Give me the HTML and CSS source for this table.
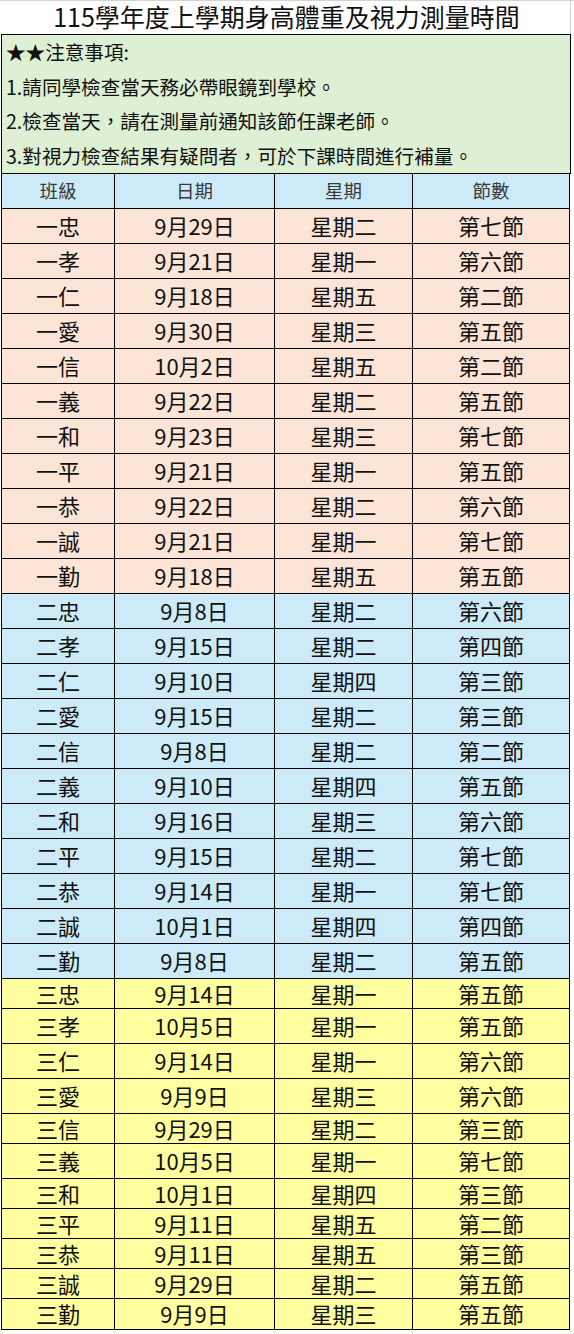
FILE: index.html
```html
<!DOCTYPE html>
<html lang="zh-Hant">
<head>
<meta charset="utf-8">
<title>115學年度上學期身高體重及視力測量時間</title>
<link rel="stylesheet" href="styles.css">
</head>
<body>
<div class="sheet">
  <div class="title">115學年度上學期身高體重及視力測量時間</div>
  <div class="notes">
    <div class="note">★★注意事項:</div>
    <div class="note">1.請同學檢查當天務必帶眼鏡到學校。</div>
    <div class="note">2.檢查當天，請在測量前通知該節任課老師。</div>
    <div class="note">3.對視力檢查結果有疑問者，可於下課時間進行補量。</div>
  </div>
  <div class="table">
    <div class="row head"><div class="c c1">班級</div><div class="c c2">日期</div><div class="c c3">星期</div><div class="c c4">節數</div></div>

    <div class="row g1"><div class="c c1">一忠</div><div class="c c2">9月29日</div><div class="c c3">星期二</div><div class="c c4">第七節</div></div>
    <div class="row g1"><div class="c c1">一孝</div><div class="c c2">9月21日</div><div class="c c3">星期一</div><div class="c c4">第六節</div></div>
    <div class="row g1"><div class="c c1">一仁</div><div class="c c2">9月18日</div><div class="c c3">星期五</div><div class="c c4">第二節</div></div>
    <div class="row g1"><div class="c c1">一愛</div><div class="c c2">9月30日</div><div class="c c3">星期三</div><div class="c c4">第五節</div></div>
    <div class="row g1"><div class="c c1">一信</div><div class="c c2">10月2日</div><div class="c c3">星期五</div><div class="c c4">第二節</div></div>
    <div class="row g1"><div class="c c1">一義</div><div class="c c2">9月22日</div><div class="c c3">星期二</div><div class="c c4">第五節</div></div>
    <div class="row g1"><div class="c c1">一和</div><div class="c c2">9月23日</div><div class="c c3">星期三</div><div class="c c4">第七節</div></div>
    <div class="row g1"><div class="c c1">一平</div><div class="c c2">9月21日</div><div class="c c3">星期一</div><div class="c c4">第五節</div></div>
    <div class="row g1"><div class="c c1">一恭</div><div class="c c2">9月22日</div><div class="c c3">星期二</div><div class="c c4">第六節</div></div>
    <div class="row g1"><div class="c c1">一誠</div><div class="c c2">9月21日</div><div class="c c3">星期一</div><div class="c c4">第七節</div></div>
    <div class="row g1"><div class="c c1">一勤</div><div class="c c2">9月18日</div><div class="c c3">星期五</div><div class="c c4">第五節</div></div>

    <div class="row g2"><div class="c c1">二忠</div><div class="c c2">9月8日</div><div class="c c3">星期二</div><div class="c c4">第六節</div></div>
    <div class="row g2"><div class="c c1">二孝</div><div class="c c2">9月15日</div><div class="c c3">星期二</div><div class="c c4">第四節</div></div>
    <div class="row g2"><div class="c c1">二仁</div><div class="c c2">9月10日</div><div class="c c3">星期四</div><div class="c c4">第三節</div></div>
    <div class="row g2"><div class="c c1">二愛</div><div class="c c2">9月15日</div><div class="c c3">星期二</div><div class="c c4">第三節</div></div>
    <div class="row g2"><div class="c c1">二信</div><div class="c c2">9月8日</div><div class="c c3">星期二</div><div class="c c4">第二節</div></div>
    <div class="row g2"><div class="c c1">二義</div><div class="c c2">9月10日</div><div class="c c3">星期四</div><div class="c c4">第五節</div></div>
    <div class="row g2"><div class="c c1">二和</div><div class="c c2">9月16日</div><div class="c c3">星期三</div><div class="c c4">第六節</div></div>
    <div class="row g2"><div class="c c1">二平</div><div class="c c2">9月15日</div><div class="c c3">星期二</div><div class="c c4">第七節</div></div>
    <div class="row g2"><div class="c c1">二恭</div><div class="c c2">9月14日</div><div class="c c3">星期一</div><div class="c c4">第七節</div></div>
    <div class="row g2"><div class="c c1">二誠</div><div class="c c2">10月1日</div><div class="c c3">星期四</div><div class="c c4">第四節</div></div>
    <div class="row g2"><div class="c c1">二勤</div><div class="c c2">9月8日</div><div class="c c3">星期二</div><div class="c c4">第五節</div></div>

    <div class="row g3 short"><div class="c c1">三忠</div><div class="c c2">9月14日</div><div class="c c3">星期一</div><div class="c c4">第五節</div></div>
    <div class="row g3"><div class="c c1">三孝</div><div class="c c2">10月5日</div><div class="c c3">星期一</div><div class="c c4">第五節</div></div>
    <div class="row g3"><div class="c c1">三仁</div><div class="c c2">9月14日</div><div class="c c3">星期一</div><div class="c c4">第六節</div></div>
    <div class="row g3"><div class="c c1">三愛</div><div class="c c2">9月9日</div><div class="c c3">星期三</div><div class="c c4">第六節</div></div>
    <div class="row g3 short"><div class="c c1">三信</div><div class="c c2">9月29日</div><div class="c c3">星期二</div><div class="c c4">第三節</div></div>
    <div class="row g3"><div class="c c1">三義</div><div class="c c2">10月5日</div><div class="c c3">星期一</div><div class="c c4">第七節</div></div>
    <div class="row g3 short"><div class="c c1">三和</div><div class="c c2">10月1日</div><div class="c c3">星期四</div><div class="c c4">第三節</div></div>
    <div class="row g3 short"><div class="c c1">三平</div><div class="c c2">9月11日</div><div class="c c3">星期五</div><div class="c c4">第二節</div></div>
    <div class="row g3 short"><div class="c c1">三恭</div><div class="c c2">9月11日</div><div class="c c3">星期五</div><div class="c c4">第三節</div></div>
    <div class="row g3 short"><div class="c c1">三誠</div><div class="c c2">9月29日</div><div class="c c3">星期二</div><div class="c c4">第五節</div></div>
    <div class="row g3 last"><div class="c c1">三勤</div><div class="c c2">9月9日</div><div class="c c3">星期三</div><div class="c c4">第五節</div></div>
  </div>
  <div class="tail"><div class="t t1"></div><div class="t t2"></div><div class="t t3"></div><div class="t t4"></div></div>
</div>
</body>
</html>
```

FILE: styles.css
```css
* { box-sizing: border-box; }

html, body {
  margin: 0;
  padding: 0;
  background: #ffffff;
}

body {
  font-family: "Noto Sans CJK TC", "Noto Sans", "Liberation Sans", sans-serif;
  color: #000;
}

.sheet {
  width: 574px;
  border-top: 1px solid #d4d4d4;
}

.title {
  height: 33px;
  width: 571px;
  border-right: 1px solid #d4d4d4;
  display: flex;
  align-items: center;
  justify-content: center;
  font-size: 25px;
  line-height: 1;
  padding-left: 3px;
  padding-bottom: 2px;
  color: #111;
}

.notes {
  margin-left: 1px;
  width: 570px;
  height: 140px;
  border: 1px solid #000;
  background: #ddf0d4;
  padding: 0 0 0 4px;
  display: flex;
  flex-direction: column;
}

.note {
  height: 34.5px;
  display: flex;
  align-items: center;
  font-size: 19.6px;
  line-height: 1;
  color: #111;
  white-space: nowrap;
}

.table {
  margin-left: 1px;
  width: 569px;
  border-left: 1px solid #000;
}

.row {
  display: flex;
  height: 35px;
  border-bottom: 1px solid #000;
}

.row.short { height: 30px; }
.row.last { height: 31px; }

.c {
  display: flex;
  align-items: center;
  justify-content: center;
  border-right: 1px solid #000;
  font-size: 22px;
  line-height: 1;
  padding-bottom: 2px;
  color: #111;
  white-space: nowrap;
}

.c1 { width: 113px; }
.c2 { width: 160px; }
.c3 { width: 138px; }
.c4 { width: 157px; }

.head { background: #cdeaf8; }
.head .c { font-size: 18.5px; color: #3a3a3a; }

.g1 { background: #fce4d6; }
.g2 { background: #cdeaf8; }
.g3 { background: #ffff9f; }

.tail {
  display: flex;
  height: 4px;
  margin-left: 2px;
}

.t { border-right: 1px solid #d9d9d9; }
.t1 { width: 113px; }
.t2 { width: 160px; }
.t3 { width: 138px; }
.t4 { width: 157px; border-right: none; }
```
